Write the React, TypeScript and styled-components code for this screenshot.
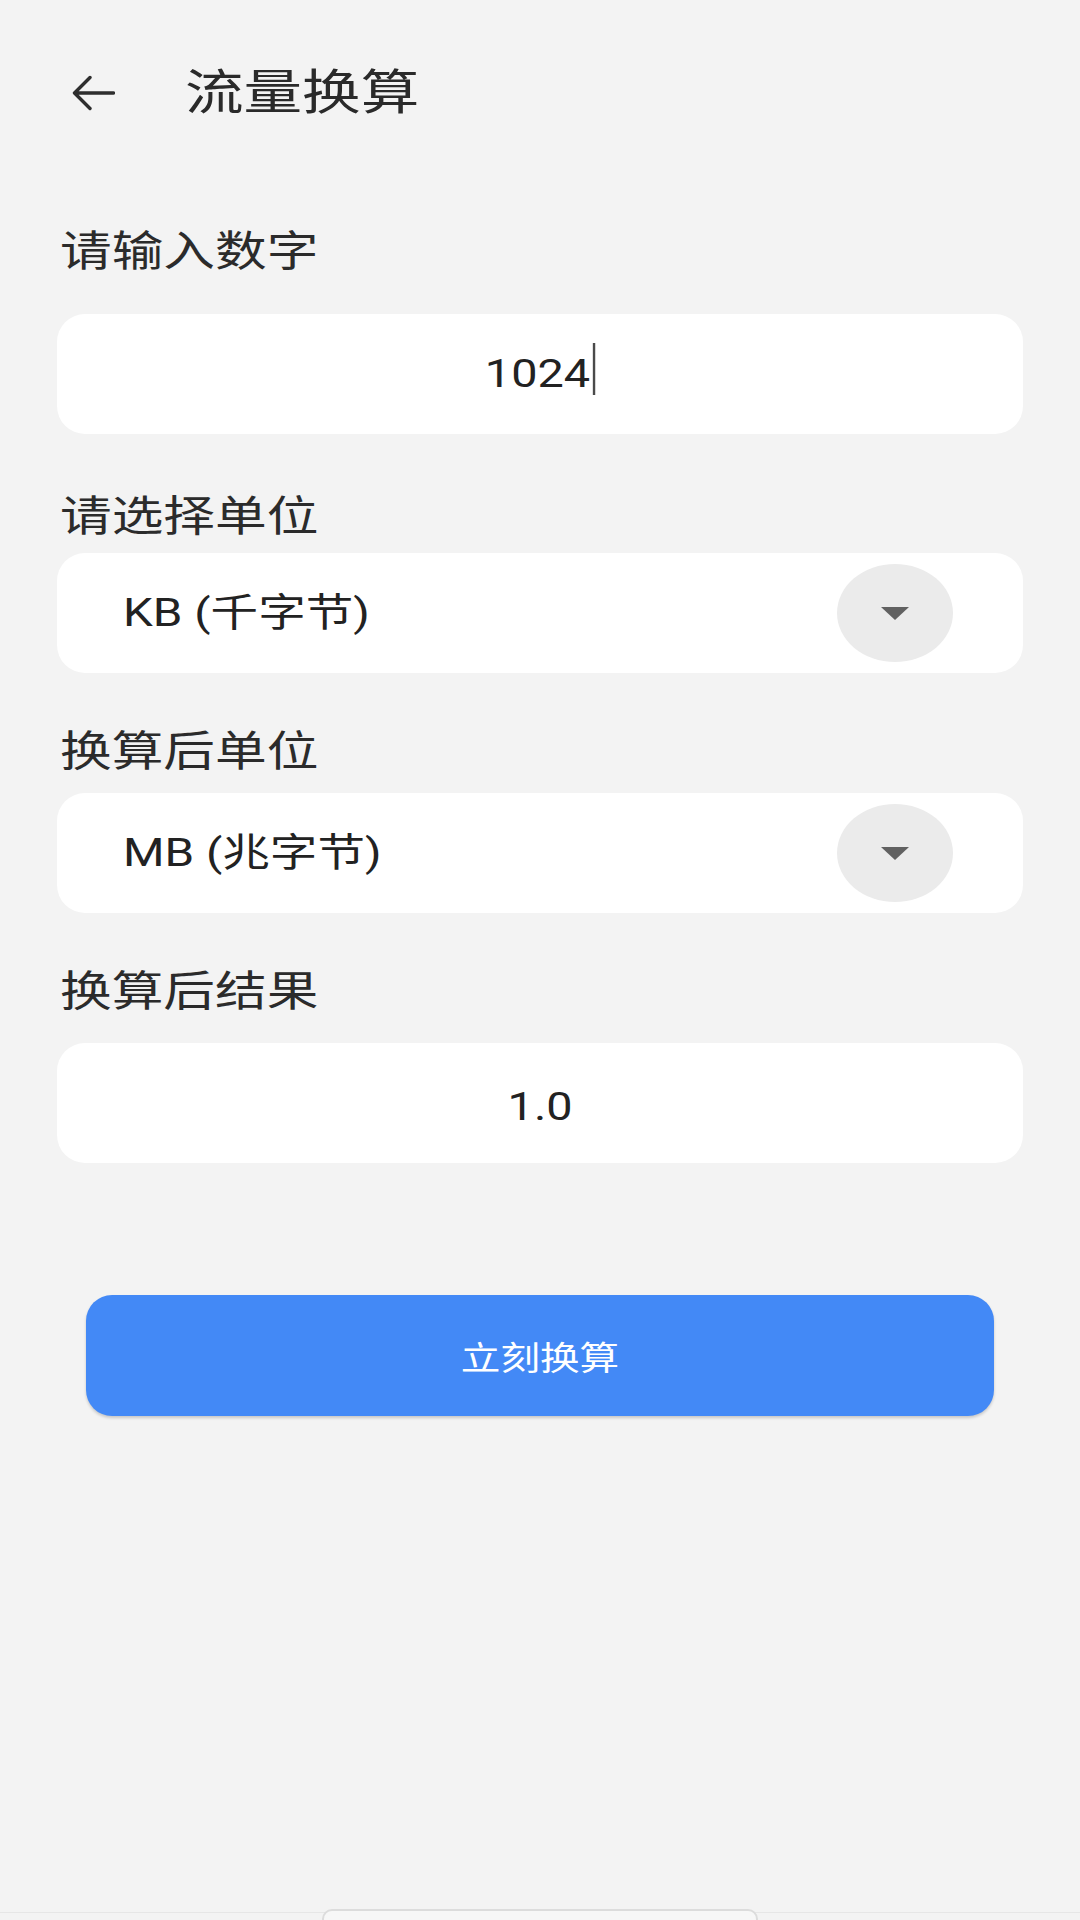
import React from "react";
import styled, { createGlobalStyle } from "styled-components";

const FONT = `"Roboto", "Noto Sans CJK SC", "Noto Sans", sans-serif`;

const GlobalStyle = createGlobalStyle`
  html, body {
    margin: 0;
    padding: 0;
    background: #f3f3f3;
  }
  * {
    box-sizing: border-box;
  }
`;

const Page = styled.div`
  width: 1080px;
  height: 1920px;
  overflow: hidden;
  background: #f3f3f3;
  display: flex;
  flex-direction: column;
  font-family: ${FONT};
  color: #222;
`;

const Header = styled.header`
  height: 185px;
  display: flex;
  align-items: center;
  padding-left: 71px;
  gap: 70px;
`;

const BackButton = styled.button`
  border: 0;
  background: none;
  padding: 0;
  width: 44px;
  height: 36px;
  display: flex;
  color: #2e2e2e;
`;

const Stretch = styled.span<{ $origin?: string; $scale?: number }>`
  display: inline-block;
  white-space: nowrap;
  transform: scaleX(${(p) => p.$scale ?? 1.2});
  transform-origin: ${(p) => p.$origin ?? "left"} center;
`;

const Title = styled.h1`
  margin: 0;
  font-size: 48px;
  font-weight: 400;
  line-height: 48px;
  color: #2a2a2a;
`;

const Form = styled.main`
  display: flex;
  flex-direction: column;
  padding: 0 57px;
`;

const Label = styled.div<{ $top: number; $gap: number }>`
  margin-top: ${(p) => p.$top}px;
  margin-bottom: ${(p) => p.$gap}px;
  padding-left: 3px;
  font-size: 42px;
  line-height: 43px;
  color: #2b2b2b;
`;

const Field = styled.div<{ $select?: boolean; $shift?: number }>`
  height: 120px;
  background: #ffffff;
  border-radius: 28px;
  display: flex;
  align-items: center;
  justify-content: ${(p) => (p.$select ? "space-between" : "center")};
  padding: ${(p) => (p.$select ? "0 70px 0 66px" : "0 24px")};
  padding-top: ${(p) => (p.$shift ?? 0) * 2}px;
`;

const Value = styled.span`
  font-size: 39px;
  line-height: 1;
  color: #222;
`;

const Caret = styled.span`
  display: inline-block;
  width: 2px;
  height: 52px;
  margin: -12px 0 -8px 2px;
  background: #4a4a4a;
`;

const DropCircle = styled.span`
  width: 116px;
  height: 98px;
  border-radius: 50%;
  background: #ebebeb;
  display: flex;
  align-items: center;
  justify-content: center;
`;

const Triangle = styled.span`
  width: 0;
  height: 0;
  border-left: 14.5px solid transparent;
  border-right: 14.5px solid transparent;
  border-top: 13px solid #616161;
`;

const SubmitButton = styled.button`
  margin: 132px 29px 0;
  height: 121px;
  border: 0;
  border-radius: 26px;
  background: #4389f6;
  color: #ffffff;
  font-family: ${FONT};
  font-size: 33px;
  box-shadow: 0 2px 3px rgba(0, 0, 0, 0.18);
  display: flex;
  align-items: center;
  justify-content: center;
`;

const HomeArea = styled.footer`
  margin-top: auto;
  height: 11px;
  display: flex;
  justify-content: center;
  align-items: flex-start;
  background: linear-gradient(
    to bottom,
    transparent 3px,
    #e6e6e6 3px,
    #e6e6e6 4px,
    transparent 4px
  );
`;

const HomeIndicator = styled.div`
  width: 436px;
  height: 22px;
  flex: none;
  border: 2px solid #dcdcdc;
  border-radius: 10px;
  background: #f7f7f7;
`;

function BackArrow() {
  return (
    <svg width="44" height="36" viewBox="0 0 44 36" fill="none">
      <path
        d="M42.5 18H4M19 2.5L3.5 18L19 33.5"
        stroke="currentColor"
        strokeWidth="3.4"
        strokeLinecap="round"
        strokeLinejoin="round"
      />
    </svg>
  );
}

function SelectField({ value }: { value: string }) {
  return (
    <Field $select>
      <Value>
        <Stretch $scale={1.22}>{value}</Stretch>
      </Value>
      <DropCircle>
        <Triangle />
      </DropCircle>
    </Field>
  );
}

export default function App() {
  return (
    <>
      <GlobalStyle />
      <Page>
        <Header>
          <BackButton aria-label="返回">
            <BackArrow />
          </BackButton>
          <Title>
            <Stretch $scale={1.22}>流量换算</Stretch>
          </Title>
        </Header>
        <Form>
          <Label $top={45} $gap={41}>
            <Stretch $scale={1.23}>请输入数字</Stretch>
          </Label>
          <Field>
            <Value>
              <Stretch $origin="center">
                1024
                <Caret />
              </Stretch>
            </Value>
          </Field>

          <Label $top={61} $gap={15}>
            <Stretch $scale={1.23}>请选择单位</Stretch>
          </Label>
          <SelectField value="KB (千字节)" />

          <Label $top={57} $gap={20}>
            <Stretch $scale={1.23}>换算后单位</Stretch>
          </Label>
          <SelectField value="MB (兆字节)" />

          <Label $top={57} $gap={30}>
            <Stretch $scale={1.23}>换算后结果</Stretch>
          </Label>
          <Field $shift={4}>
            <Value>
              <Stretch $origin="center">1.0</Stretch>
            </Value>
          </Field>

          <SubmitButton>
            <Stretch $origin="center">立刻换算</Stretch>
          </SubmitButton>
        </Form>
        <HomeArea>
          <HomeIndicator />
        </HomeArea>
      </Page>
    </>
  );
}
